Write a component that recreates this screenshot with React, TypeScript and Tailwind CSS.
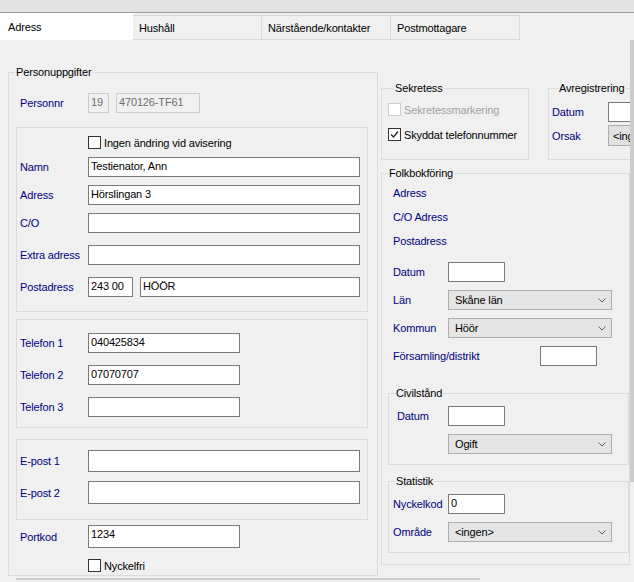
import React from 'react';

const font = '"Liberation Sans", Arial, sans-serif';

// Rambox med rubrik som ligger över överkanten (som en WinForms GroupBox)
function Group({ title, className = '', children }: { title?: string; className?: string; children?: React.ReactNode }) {
  return (
    <div className={`box-border border border-[#dcdcdc] ${className}`}>
      {title && <div className="-mt-[8px] ml-[6px] w-fit bg-[#f0f0f0] px-[1px] leading-[14px] text-black">{title}</div>}
      {children}
    </div>
  );
}

function TextBox({ value = '', className = '', disabled = false }: { value?: string; className?: string; disabled?: boolean }) {
  return (
    <div
      className={`box-border h-[20px] border pl-[2px] pt-[1px] leading-[14px] whitespace-nowrap overflow-hidden ${
        disabled ? 'border-[#cccccc] bg-[#f0f0f0] text-[#6d6d6d]' : 'border-[#7a7a7a] bg-white text-black'
      } ${className}`}
    >
      {value}
    </div>
  );
}

function Combo({ value, className = '' }: { value: string; className?: string }) {
  return (
    <div className={`box-border flex h-[20px] items-center justify-between border border-[#adadad] bg-[#e5e5e5] pl-[6px] pr-[5px] text-black ${className}`}>
      <span className="leading-[14px]">{value}</span>
      <svg width="8" height="5" viewBox="0 0 8 5" className="shrink-0">
        <path d="M0.5 0.5 L4 4 L7.5 0.5" fill="none" stroke="#606060" strokeWidth="1" />
      </svg>
    </div>
  );
}

function CheckBox({ label, checked = false, disabled = false, className = '' }: { label: string; checked?: boolean; disabled?: boolean; className?: string }) {
  return (
    <div className={`flex h-[15px] items-center gap-[3px] whitespace-nowrap ${className}`}>
      <div className={`box-border flex h-[13px] w-[13px] shrink-0 items-center justify-center border bg-white ${disabled ? 'border-[#cccccc]' : 'border-[#333333]'}`}>
        {checked && (
          <svg width="9" height="9" viewBox="0 0 9 9">
            <path d="M1 4.5 L3.5 7 L8 1.5" fill="none" stroke="#222222" strokeWidth="1.3" />
          </svg>
        )}
      </div>
      <span className={`leading-[14px] ${disabled ? 'text-[#a0a0a0]' : 'text-black'}`}>{label}</span>
    </div>
  );
}

function Label({ children, className = '' }: { children: React.ReactNode; className?: string }) {
  return <div className={`shrink-0 leading-[14px] text-[#000080] whitespace-nowrap ${className}`}>{children}</div>;
}

function Row({ label, children, className = '' }: { label: string; children: React.ReactNode; className?: string }) {
  return (
    <div className={`flex items-center ${className}`}>
      <Label className="w-[68px]">{label}</Label>
      {children}
    </div>
  );
}

const tabs = ['Adress', 'Hushåll', 'Närstående/kontakter', 'Postmottagare'];

export default function App() {
  return (
    <div
      className="relative h-[582px] w-[634px] overflow-hidden bg-[#f0f0f0] text-[11px] tracking-[-0.15px]"
      style={{ fontFamily: font }}
    >
      {/* fönsterlist ovanför flikarna */}
      <div className="h-[13px] border-b border-[#a0a0a0] bg-[#e3e3e3]" />

      {/* flikar */}
      <div className="flex h-[27px] items-end">
        {tabs.map((t, i) =>
          i === 0 ? (
            <div key={t} className="flex h-[27px] w-[133px] items-center bg-white pl-[8px] leading-[14px]">
              {t}
            </div>
          ) : (
            <div key={t} className="box-border flex h-[25px] w-[129px] items-center border border-l-0 border-[#d9d9d9] bg-[#f0f0f0] pl-[6px] leading-[14px]">
              {t}
            </div>
          )
        )}
      </div>

      {/* flikinnehåll */}
      <div className="flex">
        {/* vänster: Personuppgifter */}
        <Group title="Personuppgifter" className="ml-[8px] mt-[32px] h-[504px] w-[370px] shrink-0">
          <div className="ml-[11px] mt-[14px] flex items-center">
            <Label className="w-[68px]">Personnr</Label>
            <TextBox value="19" disabled className="w-[21px]" />
            <TextBox value="470126-TF61" disabled className="ml-[7px] w-[84px]" />
          </div>

          <Group className="ml-[7px] mt-[14px] h-[185px] w-[352px] pl-[3px]">
            <CheckBox label="Ingen ändring vid avisering" className="ml-[68px] mt-[7px]" />
            <Row label="Namn" className="mt-[7px]">
              <TextBox value="Testienator, Ann" className="w-[272px]" />
            </Row>
            <Row label="Adress" className="mt-[8px]">
              <TextBox value="Hörslingan 3" className="w-[272px]" />
            </Row>
            <Row label="C/O" className="mt-[8px]">
              <TextBox className="w-[272px]" />
            </Row>
            <Row label="Extra adress" className="mt-[12px]">
              <TextBox className="w-[272px]" />
            </Row>
            <Row label="Postadress" className="mt-[12px]">
              <TextBox value="243 00" className="w-[45px]" />
              <TextBox value="HÖÖR" className="ml-[7px] w-[220px]" />
            </Row>
          </Group>

          <Group className="ml-[7px] mt-[7px] h-[109px] w-[352px] pl-[3px]">
            <Row label="Telefon 1" className="mt-[13px]">
              <TextBox value="040425834" className="w-[152px]" />
            </Row>
            <Row label="Telefon 2" className="mt-[12px]">
              <TextBox value="07070707" className="w-[152px]" />
            </Row>
            <Row label="Telefon 3" className="mt-[12px]">
              <TextBox className="w-[152px]" />
            </Row>
          </Group>

          <Group className="ml-[7px] mt-[11px] h-[81px] w-[352px] pl-[3px]">
            <Row label="E-post 1" className="mt-[10px]">
              <TextBox className="h-[22px] w-[272px]" />
            </Row>
            <Row label="E-post 2" className="mt-[9px]">
              <TextBox className="h-[23px] w-[272px]" />
            </Row>
          </Group>

          <div className="ml-[11px] mt-[5px] flex items-center">
            <Label className="w-[68px]">Portkod</Label>
            <TextBox value="1234" className="h-[23px] w-[152px]" />
          </div>
          <CheckBox label="Nyckelfri" className="ml-[79px] mt-[10px]" />
        </Group>

        {/* höger kolumn */}
        <div className="ml-[3px] flex w-[260px] shrink-0 flex-col">
          <div className="mt-[48px] flex">
            <Group title="Sekretess" className="h-[72px] w-[148px] shrink-0 pl-[6px]">
              <CheckBox label="Sekretessmarkering" disabled className="mt-[7px]" />
              <CheckBox label="Skyddat telefonnummer" checked className="mt-[10px]" />
            </Group>
            <Group title="Avregistrering" className="ml-[19px] h-[72px] w-[110px] shrink-0 pl-[3px]">
              <div className="mt-[7px] flex items-center">
                <Label className="w-[56px]">Datum</Label>
                <TextBox className="w-[60px] shrink-0" />
              </div>
              <div className="mt-[3px] flex items-center">
                <Label className="w-[56px]">Orsak</Label>
                <div className="box-border flex h-[21px] w-[60px] shrink-0 items-center overflow-hidden whitespace-nowrap border border-[#adadad] bg-[#e1e1e1] pl-[4px] leading-[14px]">
                  &lt;ingen&gt;
                </div>
              </div>
            </Group>
          </div>

          <Group title="Folkbokföring" className="mt-[13px] h-[392px] w-[249px]">
            <div className="pl-[11px]">
              <Label className="mt-[6px]">Adress</Label>
              <Label className="mt-[10px]">C/O Adress</Label>
              <Label className="mt-[10px]">Postadress</Label>
              <div className="mt-[14px] flex items-center">
                <Label className="w-[55px]">Datum</Label>
                <TextBox className="w-[57px]" />
              </div>
              <div className="mt-[8px] flex items-center">
                <Label className="w-[55px]">Län</Label>
                <Combo value="Skåne län" className="w-[164px]" />
              </div>
              <div className="mt-[8px] flex items-center">
                <Label className="w-[55px]">Kommun</Label>
                <Combo value="Höör" className="w-[164px]" />
              </div>
              <div className="mt-[8px] flex items-center">
                <Label className="w-[147px]">Församling/distrikt</Label>
                <TextBox className="w-[57px]" />
              </div>
            </div>

            <Group title="Civilstånd" className="ml-[6px] mt-[27px] h-[72px] w-[241px]">
              <div className="mt-[6px] flex items-center pl-[8px]">
                <Label className="w-[51px]">Datum</Label>
                <TextBox className="w-[57px]" />
              </div>
              <Combo value="Ogift" className="ml-[59px] mt-[8px] w-[164px]" />
            </Group>

            <Group title="Statistik" className="ml-[6px] mt-[16px] h-[72px] w-[241px]">
              <div className="mt-[6px] flex items-center pl-[4px]">
                <Label className="w-[55px]">Nyckelkod</Label>
                <TextBox value="0" className="w-[57px]" />
              </div>
              <div className="mt-[8px] flex items-center pl-[4px]">
                <Label className="w-[55px]">Område</Label>
                <Combo value="<ingen>" className="w-[164px]" />
              </div>
            </Group>
          </Group>
        </div>
      </div>

      {/* rullningslister */}
      <div className="absolute right-0 top-[40px] h-[442px] w-[4px] bg-[#cdcdcd]" />
      <div className="absolute bottom-[2px] left-[16px] h-[2px] w-[464px] bg-[#cdcdcd]" />
    </div>
  );
}
